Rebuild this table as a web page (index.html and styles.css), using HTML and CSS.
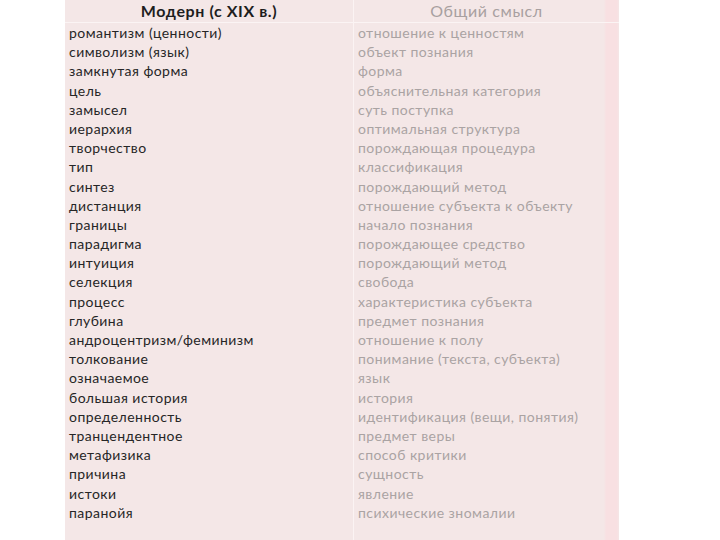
FILE: index.html
```html
<!DOCTYPE html>
<html lang="ru">
<head>
<meta charset="utf-8">
<link rel="stylesheet" href="styles.css">
</head>
<body>
<div class="sheet">
  <div class="col col-left">
    <div class="head head-left">Модерн (с XIX в.)</div>
    <div class="cell">романтизм (ценности)</div>
    <div class="cell">символизм (язык)</div>
    <div class="cell">замкнутая форма</div>
    <div class="cell">цель</div>
    <div class="cell">замысел</div>
    <div class="cell">иерархия</div>
    <div class="cell">творчество</div>
    <div class="cell">тип</div>
    <div class="cell">синтез</div>
    <div class="cell">дистанция</div>
    <div class="cell">границы</div>
    <div class="cell">парадигма</div>
    <div class="cell">интуиция</div>
    <div class="cell">селекция</div>
    <div class="cell">процесс</div>
    <div class="cell">глубина</div>
    <div class="cell">андроцентризм/феминизм</div>
    <div class="cell">толкование</div>
    <div class="cell">означаемое</div>
    <div class="cell">большая история</div>
    <div class="cell">определенность</div>
    <div class="cell">транцендентное</div>
    <div class="cell">метафизика</div>
    <div class="cell">причина</div>
    <div class="cell">истоки</div>
    <div class="cell">паранойя</div>
  </div>
  <div class="col col-right">
    <div class="head head-right">Общий смысл</div>
    <div class="cell">отношение к ценностям</div>
    <div class="cell">объект познания</div>
    <div class="cell">форма</div>
    <div class="cell">объяснительная категория</div>
    <div class="cell">суть поступка</div>
    <div class="cell">оптимальная структура</div>
    <div class="cell">порождающая процедура</div>
    <div class="cell">классификация</div>
    <div class="cell">порождающий метод</div>
    <div class="cell">отношение субъекта к объекту</div>
    <div class="cell">начало познания</div>
    <div class="cell">порождающее средство</div>
    <div class="cell">порождающий метод</div>
    <div class="cell">свобода</div>
    <div class="cell">характеристика субъекта</div>
    <div class="cell">предмет познания</div>
    <div class="cell">отношение к полу</div>
    <div class="cell">понимание (текста, субъекта)</div>
    <div class="cell">язык</div>
    <div class="cell">история</div>
    <div class="cell">идентификация (вещи, понятия)</div>
    <div class="cell">предмет веры</div>
    <div class="cell">способ критики</div>
    <div class="cell">сущность</div>
    <div class="cell">явление</div>
    <div class="cell">психические зномалии</div>
  </div>
</div>
</body>
</html>
```
FILE: styles.css
```css
html, body {
  margin: 0;
  padding: 0;
  background: #ffffff;
}
body {
  width: 720px;
  height: 540px;
  overflow: hidden;
  font-family: Lato, "Open Sans", "Liberation Sans", sans-serif;
  font-size: 14px;
}
.sheet {
  margin-left: 65px;
  width: 554px;
  height: 540px;
  display: grid;
  grid-template-columns: 288px 266px;
  background: #f4e7e7;
}
.col {
  display: flex;
  flex-direction: column;
}
.col-right {
  border-left: 1px solid #fbf3f3;
  background: linear-gradient(to right, #f4e7e7 0, #f4e7e7 250px, #f8e0e2 252px, #f8e0e2 263px, #f4e7e7 265px);
}
.head {
  height: 22px;
  line-height: 22px;
  text-align: center;
  border-bottom: 1px solid #fbf4f4;
  font-size: 16px;
  letter-spacing: 0.6px;
}
.head-left {
  font-weight: bold;
  color: #1e1e1e;
}
.head-right {
  color: #a8a0a0;
}
.cell {
  height: 19.2px;
  line-height: 19.2px;
  padding-left: 4px;
  white-space: nowrap;
  letter-spacing: 0.45px;
}
.col-left .cell {
  color: #262626;
}
.col-right .cell {
  color: #aaa3a3;
}
```
